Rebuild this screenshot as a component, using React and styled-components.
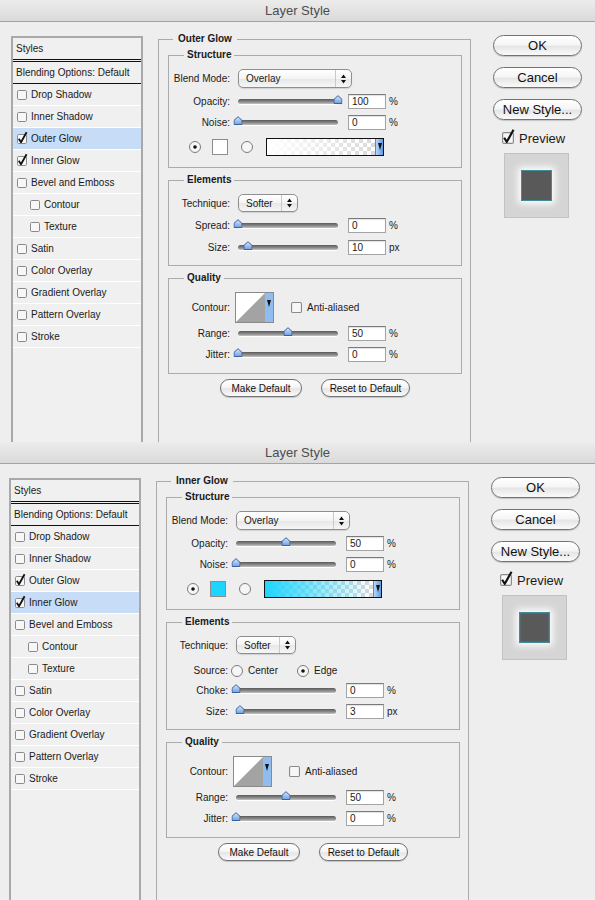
import React from "react";
import styled, { createGlobalStyle } from "styled-components";

const FONT = `"Liberation Sans", Arial, Helvetica, sans-serif`;

const GlobalStyle = createGlobalStyle`
  html, body { margin: 0; padding: 0; background: #eeeeee; }
  body { font-family: ${FONT}; font-size: 10px; color: #1a1a1a; }
  * { box-sizing: border-box; }
`;

const Window = styled.div`
  width: 595px;
  height: ${p => p.$height}px;
  overflow: hidden;
  display: flex;
  flex-direction: column;
  background: #eeeeee;
`;

const TitleBar = styled.div`
  flex: none;
  height: 22px;
  border-bottom: 1px solid #a4a4a4;
  background: linear-gradient(#ececec, #dadada);
  color: #4d4d4d;
  font-size: 13px;
  line-height: 21px;
  text-align: center;
`;

const Body = styled.div`
  flex: 1;
  min-height: 0;
  display: flex;
  padding: 14px 0 0 ${p => p.$left}px;
`;

/* ---------- style list ---------- */

const StyleList = styled.div`
  flex: none;
  width: 132px;
  border: 2px solid #a9a9a9;
  border-bottom: none;
  background: #f0f0f0;
`;

const ListHeader = styled.div`
  height: 24px;
  padding-left: 3px;
  line-height: 21px;
  border-bottom: 3px double #111;
`;

const BlendingRow = styled.div`
  height: 22px;
  padding-left: 3px;
  line-height: 21px;
  border-bottom: 1px solid #111;
`;

const StyleItem = styled.div`
  height: 22px;
  display: flex;
  align-items: center;
  gap: 4px;
  padding-left: ${p => (p.$sub ? 17 : 4)}px;
  border-bottom: 1px solid #ffffff;
  background: ${p => (p.$selected ? "#c6dcf7" : "transparent")};
`;

/* ---------- main panel ---------- */

const Panel = styled.fieldset`
  flex: none;
  width: 313px;
  min-width: 0;
  margin: -3px 0 0 15px;
  padding: 4px 8px 0 9px;
  border: 1px solid #ababab;
  border-bottom: none;
`;

const PanelTitle = styled.legend`
  margin-left: 5px;
  padding: 0 5px;
  font-weight: bold;
  font-size: 10px;
  line-height: 12px;
`;

const Group = styled.fieldset`
  min-width: 0;
  margin: ${p => p.$mt || 0}px 0 0;
  padding: 8px 0 ${p => p.$pb}px;
  border: 1px solid #ababab;
`;

const GroupTitle = styled.legend`
  margin-left: 15px;
  padding: 0 3px;
  font-weight: bold;
  font-size: 10px;
  line-height: 12px;
`;

const Row = styled.div`
  display: flex;
  align-items: center;
  height: ${p => p.$h || 21}px;
  margin-top: ${p => p.$mt || 0}px;
  padding-left: ${p => p.$pl || 0}px;
`;

const Label = styled.span`
  flex: none;
  width: 61px;
  text-align: right;
  white-space: nowrap;
`;

const SelectBox = styled.div`
  display: flex;
  align-items: center;
  width: ${p => p.$w}px;
  height: ${p => p.$h}px;
  margin-left: 8px;
  border: 1px solid #8e8e8e;
  border-radius: 5px;
  background: linear-gradient(#ffffff, #f4f4f4 50%, #e7e7e7 52%, #f6f6f6);
  box-shadow: 0 1px 1px rgba(0, 0, 0, 0.12);
`;

const SelectValue = styled.span`
  flex: 1;
  padding-left: 7px;
`;

const SelectArrows = styled.span`
  flex: none;
  width: 16px;
  height: 100%;
  display: flex;
  align-items: center;
  justify-content: center;
  border-left: 1px solid #c9c9c9;
`;

const SliderTrack = styled.div`
  position: relative;
  flex: none;
  width: 100px;
  height: 5px;
  margin-left: 8px;
  border-radius: 3px;
  background: linear-gradient(#5a5a5a, #8f8f8f 60%, #c4c4c4);
  box-shadow: 0 1px 0 #ffffff;
`;

const ThumbIcon = styled.svg`
  position: absolute;
  top: -4px;
  transform: translateX(-50%);
`;

const NumberBox = styled.div`
  flex: none;
  width: 38px;
  height: 15px;
  margin-left: 10px;
  padding-left: 3px;
  border: 1px solid #a3a3a3;
  border-top-color: #7a7a7a;
  background: #ffffff;
  line-height: 13px;
  box-shadow: inset 0 1px 1px rgba(0, 0, 0, 0.12);
`;

const Unit = styled.span`
  margin-left: 3px;
`;

const Swatch = styled.div`
  flex: none;
  width: 16px;
  height: 16px;
  margin-left: 11px;
  border: 1px solid #8c8c8c;
  background: ${p => p.$color};
`;

const RadioSpot = styled.span`
  display: flex;
  margin-left: ${p => p.$ml || 0}px;
`;

const GradientBar = styled.div`
  flex: none;
  display: flex;
  width: 118px;
  height: 18px;
  margin-left: 13px;
  border: 1px solid #111;
`;

const GradientFill = styled.div`
  flex: 1;
  background:
    linear-gradient(to right, ${p => p.$from}, ${p => p.$to}),
    repeating-conic-gradient(#d9d9d9 0 25%, #ffffff 0 50%) 0 0 / 8px 8px;
`;

const GradientMenu = styled.div`
  flex: none;
  width: 8px;
  display: flex;
  justify-content: center;
  padding-top: 4px;
  border-left: 1px solid #5f86c2;
  background: linear-gradient(to right, #b9d6f7, #5d9be6);
`;

const Option = styled.span`
  margin-left: 5px;
`;

const ContourBox = styled.svg`
  flex: none;
  margin-left: 5px;
`;

const CheckSpot = styled.span`
  display: flex;
  margin-left: ${p => p.$ml || 0}px;
`;

const ButtonRow = styled.div`
  display: flex;
  justify-content: center;
  gap: 19px;
  margin-top: 5px;
`;

const PillButton = styled.button`
  width: ${p => p.$w}px;
  height: ${p => p.$h}px;
  padding: 0;
  border: 1px solid #727272;
  border-radius: 999px;
  background: linear-gradient(#ffffff, #f6f6f6 45%, #e6e6e6 55%, #fafafa);
  box-shadow: 0 1px 1px rgba(0, 0, 0, 0.18);
  font-family: ${FONT};
  font-size: ${p => p.$size}px;
  color: #111;
`;

/* ---------- right column ---------- */

const Actions = styled.div`
  flex: none;
  width: 89px;
  margin: -1px 0 0 22px;
  display: flex;
  flex-direction: column;
  gap: 11px;
  align-self: flex-start;
`;

const PreviewToggle = styled.div`
  display: flex;
  align-items: center;
  gap: 5px;
  height: 14px;
  padding-left: 9px;
  font-size: 13px;
`;

const PreviewBox = styled.div`
  width: 65px;
  height: 65px;
  margin: -3px 0 0 11px;
  display: flex;
  align-items: center;
  justify-content: center;
  border: 1px solid #c2c2c2;
  background: #d5d5d5;
`;

const PreviewSquare = styled.div`
  width: 31px;
  height: 31px;
  border: 1px solid #3f8d98;
  background: #595959;
  box-shadow: 0 0 7px 3px rgba(255, 255, 255, 0.95)
    ${p => (p.$inner ? ", inset 0 0 2px rgba(40, 210, 255, 0.5)" : "")};
`;

/* ---------- drawings ---------- */

const Checkbox = ({ checked, size = 10 }) => (
  <svg width={size} height={size} viewBox="0 0 10 10" style={{ overflow: "visible", flex: "none" }}>
    <rect x="0.5" y="0.5" width="9" height="9" rx="1.2" fill="#f7f7f7" stroke="#8a8a8a" />
    {checked && (
      <path d="M1.8 4.8 L4 8.2 L9.6 -1.8" fill="none" stroke="#111" strokeWidth="1.8" strokeLinejoin="round" />
    )}
  </svg>
);

const Radio = ({ on }) => (
  <svg width="12" height="12" viewBox="0 0 12 12">
    <circle cx="6" cy="6" r="5.5" fill="#f6f6f6" stroke="#7b7b7b" />
    {on && <circle cx="6" cy="6" r="1.8" fill="#111" />}
  </svg>
);

const UpDown = () => (
  <svg width="5" height="10" viewBox="0 0 5 10">
    <path d="M2.5 0.5 L5 4 H0 Z M2.5 9.5 L5 6 H0 Z" fill="#111" />
  </svg>
);

const DownTick = () => (
  <svg width="4" height="7" viewBox="0 0 4 7">
    <path d="M0 0 H4 L2 7 Z" fill="#111" />
  </svg>
);

const Thumb = ({ pos }) => (
  <ThumbIcon width="9" height="9" viewBox="0 0 9 9" style={{ left: `${pos}%` }}>
    <defs>
      <linearGradient id="thumbFill" x1="0" y1="0" x2="0" y2="1">
        <stop offset="0" stopColor="#dbe9fb" />
        <stop offset="1" stopColor="#6f9fe0" />
      </linearGradient>
    </defs>
    <path d="M0.5 8.5 V4.3 L4.5 0.7 L8.5 4.3 V8.5 Z" fill="url(#thumbFill)" stroke="#3a62a3" />
  </ThumbIcon>
);

const Contour = () => (
  <ContourBox width="39" height="31" viewBox="0 0 39 31">
    <rect x="0.5" y="0.5" width="38" height="30" fill="#ffffff" stroke="#8a8a8a" />
    <path d="M1 30 L30 1 V30 Z" fill="#a3a3a3" />
    <rect x="30" y="1" width="8" height="29" fill="#8fbdf0" />
    <path d="M32 8 H36 L34 15 Z" fill="#111" />
  </ContourBox>
);

/* ---------- parts ---------- */

const Select = ({ value, w, h }) => (
  <SelectBox $w={w} $h={h}>
    <SelectValue>{value}</SelectValue>
    <SelectArrows>
      <UpDown />
    </SelectArrows>
  </SelectBox>
);

const SliderRow = ({ label, value, pos, unit = "%", mt }) => (
  <Row $mt={mt}>
    <Label>{label}</Label>
    <SliderTrack>
      <Thumb pos={pos} />
    </SliderTrack>
    <NumberBox>{value}</NumberBox>
    <Unit>{unit}</Unit>
  </Row>
);

const STYLE_NAMES = [
  { name: "Drop Shadow" },
  { name: "Inner Shadow" },
  { name: "Outer Glow", checked: true },
  { name: "Inner Glow", checked: true },
  { name: "Bevel and Emboss" },
  { name: "Contour", sub: true },
  { name: "Texture", sub: true },
  { name: "Satin" },
  { name: "Color Overlay" },
  { name: "Gradient Overlay" },
  { name: "Pattern Overlay" },
  { name: "Stroke" },
];

const Sidebar = ({ selected }) => (
  <StyleList>
    <ListHeader>Styles</ListHeader>
    <BlendingRow>Blending Options: Default</BlendingRow>
    {STYLE_NAMES.map(s => (
      <StyleItem key={s.name} $sub={s.sub} $selected={s.name === selected}>
        <Checkbox checked={s.checked} />
        {s.name}
      </StyleItem>
    ))}
  </StyleList>
);

const ActionColumn = ({ inner }) => (
  <Actions>
    <PillButton $w={89} $h={21} $size={13}>OK</PillButton>
    <PillButton $w={89} $h={21} $size={13}>Cancel</PillButton>
    <PillButton $w={89} $h={21} $size={13}>New Style...</PillButton>
    <PreviewToggle>
      <Checkbox checked size={12} />
      Preview
    </PreviewToggle>
    <PreviewBox>
      <PreviewSquare $inner={inner} />
    </PreviewBox>
  </Actions>
);

const Dialog = ({ d }) => (
  <Window $height={d.height}>
    <TitleBar>Layer Style</TitleBar>
    <Body $left={d.left}>
      <Sidebar selected={d.title} />
      <Panel>
        <PanelTitle>{d.title}</PanelTitle>

        <Group $pb={11}>
          <GroupTitle>Structure</GroupTitle>
          <Row $h={19}>
            <Label>Blend Mode:</Label>
            <Select value="Overlay" w={114} h={19} />
          </Row>
          <SliderRow label="Opacity:" value={d.opacity} pos={d.opacity} mt={3} />
          <SliderRow label="Noise:" value="0" pos={0} />
          <Row $h={18} $mt={5} $pl={20}>
            <Radio on />
            <Swatch $color={d.swatch} />
            <RadioSpot $ml={13}>
              <Radio />
            </RadioSpot>
            <GradientBar>
              <GradientFill $from={d.gradFrom} $to={d.gradTo} />
              <GradientMenu>
                <DownTick />
              </GradientMenu>
            </GradientBar>
          </Row>
        </Group>

        <Group $mt={6} $pb={7}>
          <GroupTitle>Elements</GroupTitle>
          <Row $h={18}>
            <Label>Technique:</Label>
            <Select value="Softer" w={60} h={18} />
          </Row>
          {d.source ? (
            <>
              <Row $h={19} $mt={7}>
                <Label>Source:</Label>
                <RadioSpot $ml={3}>
                  <Radio />
                </RadioSpot>
                <Option>Center</Option>
                <RadioSpot $ml={19}>
                  <Radio on />
                </RadioSpot>
                <Option>Edge</Option>
              </Row>
              <SliderRow label="Choke:" value="0" pos={0} />
              <SliderRow label="Size:" value={d.size} pos={d.sizePos} unit="px" />
            </>
          ) : (
            <>
              <SliderRow label="Spread:" value="0" pos={0} mt={3} />
              <SliderRow label="Size:" value={d.size} pos={d.sizePos} unit="px" mt={1} />
            </>
          )}
        </Group>

        <Group $mt={6} $pb={8}>
          <GroupTitle>Quality</GroupTitle>
          <Row $h={30}>
            <Label>Contour:</Label>
            <Contour />
            <CheckSpot $ml={17}>
              <Checkbox size={11} />
            </CheckSpot>
            <Option>Anti-aliased</Option>
          </Row>
          <SliderRow label="Range:" value="50" pos={50} mt={1} />
          <SliderRow label="Jitter:" value="0" pos={0} />
        </Group>

        <ButtonRow>
          <PillButton $w={82} $h={18} $size={10}>Make Default</PillButton>
          <PillButton $w={89} $h={18} $size={10}>Reset to Default</PillButton>
        </ButtonRow>
      </Panel>
      <ActionColumn inner={d.source} />
    </Body>
  </Window>
);

const DIALOGS = [
  {
    height: 442,
    left: 11,
    title: "Outer Glow",
    opacity: 100,
    swatch: "#ffffff",
    gradFrom: "rgba(255,255,255,1)",
    gradTo: "rgba(255,255,255,0)",
    size: "10",
    sizePos: 10,
    source: false,
  },
  {
    height: 458,
    left: 9,
    title: "Inner Glow",
    opacity: 50,
    swatch: "#1ed5ff",
    gradFrom: "rgba(30,213,255,1)",
    gradTo: "rgba(30,213,255,0)",
    size: "3",
    sizePos: 4,
    source: true,
  },
];

export default function App() {
  return (
    <>
      <GlobalStyle />
      {DIALOGS.map(d => (
        <Dialog key={d.title} d={d} />
      ))}
    </>
  );
}
